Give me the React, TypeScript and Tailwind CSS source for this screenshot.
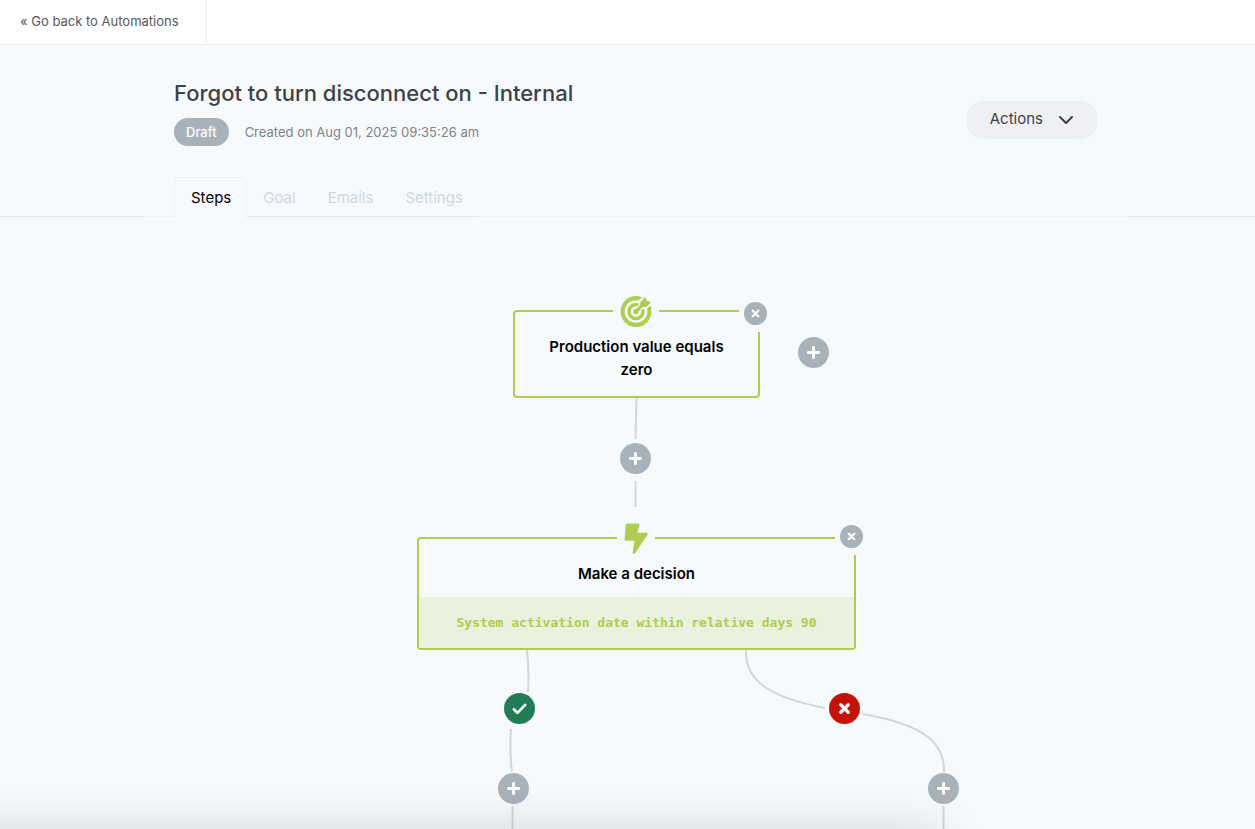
import React from 'react';
import { ChevronDown } from 'lucide-react';
import { clsx } from 'clsx';

const tabs = [
  { label: 'Steps', active: true },
  { label: 'Goal', active: false },
  { label: 'Emails', active: false },
  { label: 'Settings', active: false },
];

const PlusGlyph = () => (
  <svg viewBox="0 0 16 16" className="w-[15px] h-[15px]" fill="none" stroke="currentColor" strokeWidth="3" strokeLinecap="round">
    <path d="M8 2.500v11M2.500 8h11" />
  </svg>
);

const CrossGlyph = ({ className }: { className: string }) => (
  <svg viewBox="0 0 16 16" className={className} fill="none" stroke="currentColor" strokeWidth="3.4" strokeLinecap="round">
    <path d="M4 4l8 8M12 4l-8 8" />
  </svg>
);

const CheckGlyph = () => (
  <svg viewBox="0 0 16 16" className="w-[15px] h-[15px]" fill="none" stroke="currentColor" strokeWidth="2.8" strokeLinecap="round" strokeLinejoin="round">
    <path d="M2 8.800l3.800 3.800 8.200-8.400" />
  </svg>
);

const TargetIcon = () => (
  <svg viewBox="0 0 32 32" className="w-8 h-8" fill="none" stroke="currentColor">
    <circle cx="16" cy="15.500" r="13.400" strokeWidth="4.100" />
    <circle cx="16" cy="15.500" r="7" strokeWidth="3.400" />
    {/* gap that separates the dart from the rings */}
    <path d="M16 15.500L28 3.500" stroke="#f6fafd" strokeWidth="6" />
    <path d="M20.200 11.300V5.200L25.200.5l1.600 4.200 4.400 1.500-4.900 5.100z" fill="#f6fafd" stroke="#f6fafd" strokeWidth="3" />
    <circle cx="15.800" cy="15.700" r="2.600" fill="currentColor" stroke="none" />
    <path d="M16 15.500L23 8.500" strokeWidth="3.200" />
    <path d="M20.900 10.500V5.900L25 1.500l1.400 3.700 4 1.400-4.300 4z" fill="currentColor" strokeWidth="1" strokeLinejoin="round" />
  </svg>
);

const BoltIcon = () => (
  <svg viewBox="0 0 24 32" className="w-6 h-8" fill="currentColor" stroke="currentColor" strokeWidth="2.600" strokeLinejoin="round">
    <path d="M3 1.800h11.200L11.500 11H22.500L10 29.500l2-13H1.800z" />
  </svg>
);

const AddStep = ({ className }: { className: string }) => (
  <button
    type="button"
    aria-label="Add step"
    className={clsx('absolute w-[31px] h-[31px] rounded-full bg-[#a8b2bb] text-white flex items-center justify-center', className)}
  >
    <PlusGlyph />
  </button>
);

interface StepNodeProps {
  title: string;
  icon: React.ReactNode;
  condition?: string;
  className: string;
}

const StepNode = ({ title, icon, condition, className }: StepNodeProps) => (
  <div className={clsx('absolute border-2 border-[#afcd50] rounded-[4px] text-center', className)}>
    <div className="absolute -top-4 left-0 right-px flex justify-center text-[#afcd50]">
      <span className="px-[7px] h-8 bg-[#f6fafd]">{icon}</span>
    </div>
    <div className={clsx('absolute -right-[9px] w-7 h-[30px] bg-[#f6fafd] flex justify-end', condition ? '-top-3.5' : '-top-2.5')}>
      <button
        type="button"
        aria-label="Remove step"
        className="w-[23px] h-[23px] rounded-full bg-[#a8b2bb] text-white flex items-center justify-center"
      >
        <CrossGlyph className="w-[11px] h-[11px]" />
      </button>
    </div>
    <h2 className={clsx('px-7 pt-[23px] text-[15px] leading-[23px] font-semibold text-black', condition ? 'pb-3' : 'pb-[15px]')}>
      {title}
    </h2>
    {condition && (
      <p className="bg-[#eaf1dd] py-4 font-['DejaVu_Sans_Mono',monospace] text-[13px] leading-[19px] font-bold text-[#afcd50]">
        {condition}
      </p>
    )}
  </div>
);

export default function App() {
  return (
    <div className="min-h-screen flex flex-col overflow-hidden bg-[#f6fafd] font-['Inter',sans-serif] text-[#3f4147]">
      <nav className="flex h-[45px] bg-white border-b border-[#ececf3]">
        <a href="#automations" className="flex items-center pl-5 pr-[27px] border-r border-[#ececf3] text-[13px] text-[#55575c]">
          « Go back to Automations
        </a>
      </nav>

      <header className="pl-[17px] border-b border-[#e5e9ec]">
        <div className="max-w-[984px] mx-auto -mb-px px-[30px] pt-8 border-b border-[#eef2f5]">
          <div className="flex items-center justify-between">
            <div>
              <h1 className="text-[22px] leading-8 font-medium">Forgot to turn disconnect on - Internal</h1>
              <div className="flex items-center gap-4 mt-[9px] text-[13px]">
                <span className="h-7 px-3 pt-0.5 flex items-center rounded-full bg-[#a8b2bb] font-medium text-white">Draft</span>
                <span className="pt-0.5 text-[#7f8287]">Created on Aug 01, 2025 09:35:26 am</span>
              </div>
            </div>
            <button type="button" className="h-[38px] mt-4 pl-6 pr-5 flex items-center gap-[11px] rounded-full bg-[#eef0f5] text-[15px]">
              Actions
              <ChevronDown className="w-6 h-6" />
            </button>
          </div>
          <div role="tablist" className="flex mt-[31px] -mb-px">
            {tabs.map((tab) => (
              <button
                key={tab.label}
                type="button"
                role="tab"
                aria-selected={tab.active}
                className={clsx(
                  'h-10 text-[15px]',
                  tab.active
                    ? 'pl-4 pr-[15px] pt-px border border-b-0 border-[#edf0f4] rounded-t-[4px] bg-[#f6fafd] text-black'
                    : 'px-4 pt-[3px] border-b border-[#e4e8f0] text-[#d0d6e0]'
                )}
              >
                {tab.label}
              </button>
            ))}
          </div>
        </div>
      </header>

      <main className="flex-1 pl-[17px]">
        <div className="relative max-w-[984px] h-[612px] mx-auto">
          <svg width="984" height="612" className="absolute inset-0" fill="none" stroke="#d0d5df" strokeWidth="2">
            <path d="M492.500 181L491.500 222M491.500 264v26" />
            <path d="M383 433c1.500 14 2 26 1 42M367 512c-1 14-1 28 1 43M368.500 589v23" />
            <path d="M602 433c-1 31 23 47 79 58M719 497c56 10 82 26 81 58M799.500 589v23" />
          </svg>

          <StepNode title="Production value equals zero" icon={<TargetIcon />} className="left-[369px] top-[93px] w-[247px]" />
          <AddStep className="left-[654px] top-[120px]" />
          <AddStep className="left-[476px] top-[226px]" />

          <StepNode
            title="Make a decision"
            icon={<BoltIcon />}
            condition="System activation date within relative days 90"
            className="left-[273px] top-[320px] w-[439px]"
          />
          <span role="img" aria-label="Yes" className="absolute left-[360px] top-[476px] w-[31px] h-[31px] rounded-full bg-[#207d56] text-white flex items-center justify-center">
            <CheckGlyph />
          </span>
          <span role="img" aria-label="No" className="absolute left-[685px] top-[476px] w-[31px] h-[31px] rounded-full bg-[#c41208] text-white flex items-center justify-center">
            <CrossGlyph className="w-[15px] h-[15px]" />
          </span>
          <AddStep className="left-[354px] top-[556px]" />
          <AddStep className="left-[784px] top-[556px]" />
        </div>
      </main>

      <div className="fixed top-full -left-20 right-1/4 h-40 shadow-[0_0_44px_rgba(0,0,0,0.14)] pointer-events-none" />
    </div>
  );
}
